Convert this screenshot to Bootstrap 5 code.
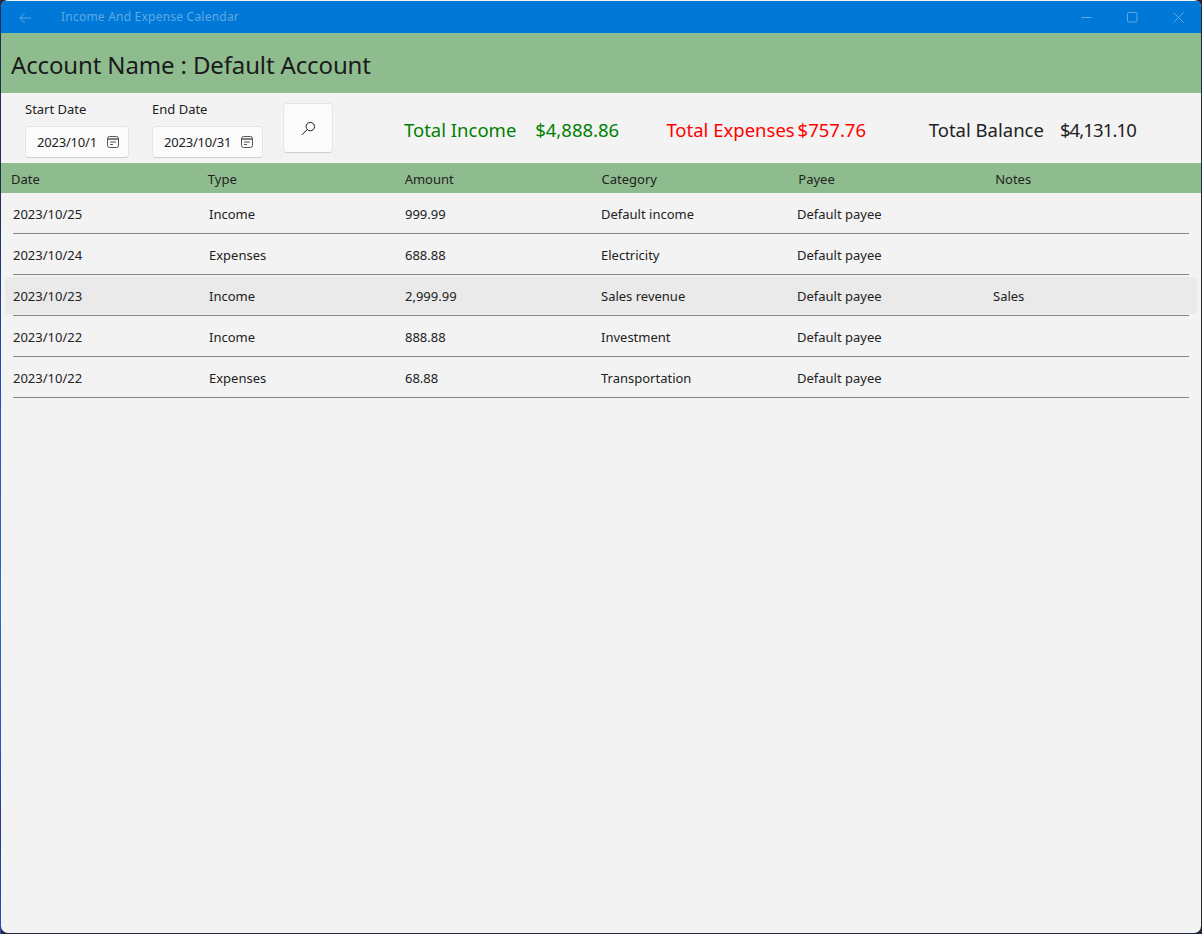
<!DOCTYPE html>
<html lang="en">
<head>
  <meta charset="UTF-8" />
  <meta name="viewport" content="width=device-width, initial-scale=1" />
  <title>Income And Expense Calendar</title>
  <link href="https://cdn.jsdelivr.net/npm/bootstrap@5.3.0/dist/css/bootstrap.min.css" rel="stylesheet" />
  <style>
    html, body { height: 100%; }
    body { background: linear-gradient(to bottom, #1f2f55 0, #1f2f55 200px, #2450c4 400px, #2b6cc0 600px, #2450c4 760px, #2c3a80 820px, #2450c4 934px) left top / 1px 100% no-repeat, #20283c; font-family: "Noto Sans", "Open Sans", sans-serif; color: #222; font-size: 13px; overflow: hidden; }
    .app-window { height: 933px; margin: 0 1px 0 1px; padding-top: 1px; background: #f3f3f3; border-radius: 7px; overflow: hidden; }
    .title-strip { height: 32px; background: #0078d7; color: #5eaae6; font-size: 12px; letter-spacing: .22px; }
    .back-arrow { width: 60px; padding-left: 18px; }
    .win-btn { width: 46px; }
    .account-bar { height: 60px; background: #8fbc8f; padding: 4px 0 0 10px; font-size: 24px; letter-spacing: -.14px; color: #1a1a1a; }
    .tool-bar { height: 70px; padding-left: 24px; }
    .date-group { width: 127px; padding-top: 7px; }
    .date-label { line-height: 18px; margin-bottom: 8px; }
    .date-box { height: 32px; background: #fbfbfb; border: 1px solid #e5e5e5; border-bottom-color: #cfcfcf; border-radius: 4px; padding: 2px 9px 0 11px; }
    .date-box span { letter-spacing: -.2px; margin-right: 2px; }
    .date-box svg { margin-top: -2px; }
    .search-btn { width: 50px; height: 50px; margin-top: 10px; margin-left: 4px; background: #fbfbfb; border: 1px solid #e5e5e5; border-bottom-color: #cfcfcf; border-radius: 4px; padding: 0; }
    .search-btn:hover { background: #fbfbfb; border-color: #e5e5e5; }
    .totals-grid { display: grid; grid-template-columns: repeat(6, 131.2px); margin-left: 71px; font-size: 18.5px; height: 74px; }
    .income-text { color: #008000; }
    .expense-text { color: #ff0000; }
    .balance-value { letter-spacing: -.9px; }
    .head-row { height: 30px; background: #8fbc8f; padding: 3px 0 0 10px; width: 100%; margin: 0; }
    .head-row > div { width: 196.83px; padding: 0; }
    .data-row { height: 41px; position: relative; margin: 0 12px; width: 1176px; padding-top: 2px; }
    .data-row > div { width: 196px; padding: 0; }
    .data-row::after { content: ""; position: absolute; left: 0; right: 0; bottom: 0; height: 1px; background: #858585; }
    .row-hover::before { content: ""; position: absolute; z-index: 0; left: -8px; right: -8px; top: 2px; height: 37px; background: #eaeaea; border-radius: 4px; }
    .row-hover > div { z-index: 1; position: relative; }
  </style>
</head>
<body>
  <div class="app-window">
    <div class="title-strip d-flex align-items-center">
      <div class="back-arrow">
        <svg width="12" height="12" viewBox="0 0 12 12" fill="none" stroke="#5eaae6" stroke-width="1"><path d="M12 6H.8M5.6 1 .8 6l4.8 5"/></svg>
      </div>
      <div class="flex-grow-1">Income And Expense Calendar</div>
      <div class="win-btn text-center">
        <svg width="11" height="11" viewBox="0 0 11 11" fill="none" stroke="#5eaae6"><path d="M.5 5.5h10"/></svg>
      </div>
      <div class="win-btn text-center">
        <svg width="11" height="11" viewBox="0 0 11 11" fill="none" stroke="#5eaae6"><rect x=".5" y=".5" width="9.5" height="9.5" rx="1.2"/></svg>
      </div>
      <div class="win-btn text-center">
        <svg width="11" height="11" viewBox="0 0 11 11" fill="none" stroke="#5eaae6"><path d="M.5.5l10 10M10.5.5l-10 10"/></svg>
      </div>
    </div>

    <div class="account-bar d-flex align-items-center">Account Name : Default Account</div>

    <div class="tool-bar d-flex">
      <div class="date-group">
        <div class="date-label">Start Date</div>
        <div class="date-box d-inline-flex align-items-center gap-2">
          <span>2023/10/1</span>
          <svg width="12" height="12" viewBox="0 0 12 12" fill="none" stroke="#555"><rect x=".5" y=".5" width="11" height="11" rx="2"/><path d="M1 3h10" stroke-width="1.6"/><path d="M3 6h6M3 8.5h3" stroke-width="1.2"/></svg>
        </div>
      </div>
      <div class="date-group">
        <div class="date-label">End Date</div>
        <div class="date-box d-inline-flex align-items-center gap-2">
          <span>2023/10/31</span>
          <svg width="12" height="12" viewBox="0 0 12 12" fill="none" stroke="#555"><rect x=".5" y=".5" width="11" height="11" rx="2"/><path d="M1 3h10" stroke-width="1.6"/><path d="M3 6h6M3 8.5h3" stroke-width="1.2"/></svg>
        </div>
      </div>
      <button type="button" class="btn search-btn d-flex align-items-center justify-content-center">
        <svg width="15" height="15" viewBox="0 0 15 15" fill="none" stroke="#1a1a1a"><circle cx="9.3" cy="5.6" r="4.2"/><path d="M6.2 8.6 1 13.8"/></svg>
      </button>
      <div class="totals-grid align-items-center">
        <div class="income-text">Total Income</div><div class="income-text">$4,888.86</div>
        <div class="expense-text">Total Expenses</div><div class="expense-text">$757.76</div>
        <div>Total Balance</div><div class="balance-value">$4,131.10</div>
      </div>
    </div>

    <div class="row head-row align-items-center">
      <div class="col-auto">Date</div><div class="col-auto">Type</div><div class="col-auto">Amount</div>
      <div class="col-auto">Category</div><div class="col-auto">Payee</div><div class="col-auto">Notes</div>
    </div>

    <div id="rows"></div>
  </div>

  <script src="https://cdn.jsdelivr.net/npm/bootstrap@5.3.0/dist/js/bootstrap.bundle.min.js"></script>
  <script>
    const records = [
      ['2023/10/25', 'Income', '999.99', 'Default income', 'Default payee', ''],
      ['2023/10/24', 'Expenses', '688.88', 'Electricity', 'Default payee', ''],
      ['2023/10/23', 'Income', '2,999.99', 'Sales revenue', 'Default payee', 'Sales'],
      ['2023/10/22', 'Income', '888.88', 'Investment', 'Default payee', ''],
      ['2023/10/22', 'Expenses', '68.88', 'Transportation', 'Default payee', '']
    ];
    const rows = document.getElementById('rows');
    records.forEach((rec, i) => {
      const row = document.createElement('div');
      row.className = 'row data-row align-items-center' + (i === 2 ? ' row-hover' : '');
      rec.forEach(text => {
        const cell = document.createElement('div');
        cell.className = 'col-auto';
        cell.textContent = text;
        row.appendChild(cell);
      });
      rows.appendChild(row);
    });
  </script>
</body>
</html>
